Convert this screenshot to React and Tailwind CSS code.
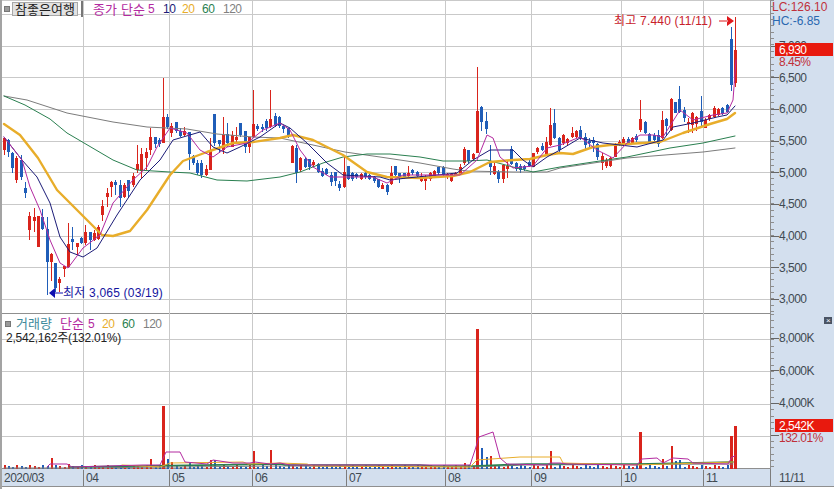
import React from "react";

// x, colour (r/b), body top, body bottom, wick top, wick bottom (screen pixels)
const candles = [
  [4.7,"r",138,150,137,155],[8.3,"b",140,152,139,157],[12.3,"b",153,168,152,173],[16.6,"r",158,180,156,183],[21.3,"b",160,177,155,180],[25.3,"b",188,193,182,198],
  [29.3,"r",216,230,212,240],[34,"r",217,221,208,232],[38.3,"r",216,247,216,247],[42.3,"b",217,229,209,230],[47.3,"b",229,262,217,295],[51.3,"r",254,262,253,281],
  [55.3,"b",263,288,263,292],[59.3,"r",279,283,277,292],[64.3,"r",266,269,266,277],[68.3,"r",244,267,223,268],[72.3,"b",239,242,227,250],[77.3,"r",243,247,243,255],
  [81.3,"b",238,243,237,244],[85.3,"r",232,243,225,245],[90.3,"b",232,240,232,250],[94.3,"r",233,240,230,241],[98.3,"r",227,239,225,240],[102.3,"r",206,215,200,221],
  [107,"r",193,197,188,207],[111,"r",182,187,181,197],[115.7,"b",182,185,180,195],[120,"b",185,198,180,207],[124.5,"r",185,197,183,198],[128.5,"b",180,191,180,197],
  [133,"r",176,185,173,187],[137,"r",164,170,145,173],[141.5,"r",154,171,148,178],[146,"r",152,158,148,170],[150.7,"r",137,150,128,155],[155,"b",137,144,137,148],
  [159,"b",140,144,138,147],[163.7,"r",117,143,78,143],[167.7,"b",117,127,114,129],[171.3,"r",126,133,123,137],[176.3,"b",122,131,122,133],[180.3,"b",131,136,128,137],
  [184.7,"r",131,135,127,136],[189.3,"b",132,154,132,170],[193.3,"b",156,163,155,165],[197,"b",163,173,160,175],[201.7,"b",163,175,160,178],[206.7,"r",169,175,165,176],
  [210.7,"r",151,170,138,170],[214.7,"b",114,143,114,146],[219,"b",140,144,140,153],[223.7,"r",135,150,117,154],[227.7,"b",134,143,123,147],[232,"r",135,147,131,147],
  [236.7,"r",137,140,127,142],[240.7,"b",123,135,123,137],[245.3,"b",131,147,131,153],[249.3,"r",137,147,137,153],[253.3,"r",124,137,90,138],[257.3,"b",126,129,124,131],
  [262,"b",127,129,124,132],[266,"b",121,128,119,131],[270,"r",119,127,90,128],[275,"b",116,125,113,127],[279,"b",117,126,116,128],[283.3,"b",126,129,125,133],
  [288,"b",128,137,128,138],[292.7,"r",146,163,145,163],[296.3,"b",148,173,145,183],[300.3,"r",158,170,157,172],[305.3,"b",159,167,157,168],[309.3,"b",159,167,159,170],
  [313.3,"r",162,165,160,167],[318.3,"b",164,172,163,173],[322.3,"b",171,176,168,177],[326.3,"b",169,174,168,175],[331.7,"b",175,182,172,186],[335.3,"b",172,181,172,186],
  [339.3,"b",184,188,181,191],[344.3,"r",172,187,157,188],[348.3,"b",166,179,166,180],[352.3,"b",173,179,172,181],[356.3,"b",174,177,173,179],[361.3,"r",174,179,173,180],
  [365.3,"b",173,177,172,179],[369.3,"b",175,179,174,180],[374.3,"b",177,181,176,183],[378.3,"b",179,187,179,188],[382.3,"r",185,189,183,189],[387.3,"b",185,192,184,195],
  [391.3,"r",173,184,166,185],[395.3,"b",166,175,166,176],[399.3,"b",173,177,173,183],[404.3,"b",173,177,173,179],[408.3,"r",173,176,166,177],[412.3,"b",170,173,169,175],
  [417.3,"b",172,176,171,179],[421.3,"r",176,181,173,182],[425.3,"r",177,181,175,190],[430.3,"r",173,179,172,181],[434.3,"r",171,177,170,177],[438.7,"b",167,173,167,175],
  [443.3,"b",167,175,166,176],[447.3,"r",174,177,173,179],[451.3,"r",174,181,173,182],[455.7,"r",173,175,172,176],[460.3,"r",167,174,164,175],[464.3,"r",149,163,147,165],
  [468.3,"b",150,161,150,163],[473.3,"r",154,159,153,161],[477.3,"r",111,153,67,153],[481.3,"b",107,122,106,131],[486.3,"b",121,129,112,134],[490.3,"b",162,167,145,175],
  [494.3,"r",166,174,162,175],[498.7,"b",172,179,170,183],[503.3,"r",165,179,164,183],[507.3,"r",166,169,160,178],[511.3,"b",149,164,146,165],[516.3,"b",163,169,162,171],
  [520.3,"b",166,170,164,173],[524.3,"b",166,169,165,171],[529.3,"b",162,166,160,167],[533.3,"r",153,167,153,167],[537.3,"r",148,152,147,154],[542.3,"b",146,150,143,151],
  [546.3,"r",142,154,137,156],[550.3,"r",125,145,108,146],[554.3,"b",123,138,109,139],[559.3,"b",138,150,137,152],[563.3,"r",135,143,134,145],[567.3,"r",139,143,138,145],
  [572.3,"r",133,137,127,138],[576.3,"r",131,137,130,138],[580.3,"b",130,138,126,140],[585,"b",137,145,133,150],[589.3,"b",141,143,138,147],[593.3,"b",140,143,137,152],
  [597.3,"b",144,157,143,160],[602.3,"r",156,163,153,170],[606.3,"r",160,166,158,168],[610.3,"r",158,166,157,167],[615.3,"r",145,157,143,157],[619.3,"r",142,145,140,146],
  [623.3,"r",139,145,137,146],[628.3,"b",139,143,137,144],[632.3,"r",138,143,137,144],[636.3,"b",136,140,134,142],[640.3,"r",119,130,100,132],[645.3,"b",122,133,121,134],
  [649.3,"b",134,142,133,144],[654.3,"b",135,140,133,142],[658.3,"b",135,144,130,147],[662.3,"r",120,138,111,139],[666.3,"b",119,126,118,135],[671.3,"r",99,130,98,131],
  [675.3,"b",102,113,102,113],[679.3,"b",99,112,86,113],[684.3,"b",110,118,107,122],[688.3,"r",122,124,118,133],[692.3,"r",113,125,112,133],[696.3,"r",117,124,116,131],
  [701.3,"b",111,122,96,128],[705.3,"r",120,128,118,128],[709.3,"r",115,119,114,121],[714.3,"r",108,117,106,118],[718.3,"r",109,115,108,116],[722.3,"b",108,114,107,115],
  [727.3,"b",105,112,104,113],[731.3,"b",39,85,27,91],[735.3,"r",50,83,17,87],
];

const ma120 = "4,96 27,100 67,113 113,122 147,127 187,129 217,134 253,137 280,138 313,145 345,152 380,157 420,163 453,169 467,171 513,172 547,172 560,168 627,158 703,152 735,148";
const ma60 = "4,96 25,105 50,119 67,133 113,160 137,170 170,172 190,173 217,180 247,181 280,177 300,172 323,163 343,157 367,154 390,154 420,157 443,161 467,161 487,160 513,167 533,172 560,167 593,162 627,157 670,148 703,143 735,136";
const ma20 = "4,124 20,135 38,158 57,190 77,210 102,235 113,236 130,231 147,210 170,175 183,161 207,152 233,143 253,142 280,138 293,135 313,140 343,155 367,172 387,177 420,178 453,176 470,172 490,162 513,160 530,159 547,155 560,153 573,154 593,147 610,145 660,142 683,133 710,124 727,119 735,113";
const ma10 = "4,137 22,160 37,177 50,203 60,237 70,252 83,257 97,248 117,215 140,180 160,160 173,140 200,132 213,147 227,153 240,147 260,137 280,123 290,128 307,143 327,163 343,175 380,177 390,180 407,178 457,173 473,160 490,150 513,150 523,160 533,167 547,157 560,150 580,138 603,143 637,147 663,140 673,127 693,123 717,117 727,115 735,106";
const ma5 = "4,137 22,160 30,187 40,210 50,240 60,263 68,268 83,248 100,235 113,203 133,180 147,167 157,147 170,128 187,133 200,150 213,157 227,147 247,143 263,130 280,123 290,130 300,150 313,167 330,177 343,177 373,177 387,183 403,175 447,175 460,175 477,160 487,135 493,138 500,157 513,168 533,166 547,148 560,145 580,137 597,150 613,158 627,143 640,135 653,135 663,137 680,110 693,120 713,115 727,113 733,100 736,60";

const volTops = {
  51: 458, 68: 464, 150: 459, 163: 406, 167: 459, 171: 462, 189: 463, 210: 460, 214: 460, 253: 451, 270: 450,
  464: 463, 477: 329, 481: 448, 486: 457, 490: 456, 550: 451, 640: 432, 662: 459, 671: 446, 675: 461, 679: 460, 731: 436, 735: 426,
};
const volRed = [490, 731];

const vol5 = "47,467 50,464 67,464 72,467 143,465 160,465 166,452 180,452 185,462 207,464 213,460 233,463 250,463 255,462 270,464 280,463 290,465 470,465 475,450 479,437 493,432 500,458 507,464 547,465 550,463 560,463 567,464 637,465 642,459 657,458 663,463 673,458 688,459 693,463 728,464 732,457 735,456";
const vol20 = "122,465 160,467 170,463 243,462 248,464 280,463 307,464 313,466 470,467 477,460 520,457 560,457 563,463 637,465 733,462";
const vol60 = "70,467 280,464 285,465 420,465 433,466 473,466 527,464 637,464 733,462";
const vol120 = "4,468 70,468 280,466 473,467 527,465 733,464";

const monthLines = [83, 169, 252, 346, 445, 531, 621, 703];
const months = [
  { label: "2020/03", w: "w-[81px]" },
  { label: "04", w: "w-[86px]" },
  { label: "05", w: "w-[83px]" },
  { label: "06", w: "w-[94px]" },
  { label: "07", w: "w-[99px]" },
  { label: "08", w: "w-[86px]" },
  { label: "09", w: "w-[90px]" },
  { label: "10", w: "w-[82px]" },
  { label: "11", w: "w-[67px]" },
];
const priceGrid = [14, 46, 77, 109, 141, 172, 204, 236, 267, 299];
const volumeGrid = [339, 371, 404, 436];
const prices = ["7,000", "6,500", "6,000", "5,500", "5,000", "4,500", "4,000", "3,500", "3,000"];

function Square() {
  return <span className="w-[6px] h-[6px] bg-[#9a9a9a] border border-[#777] shrink-0" />;
}

function Grid({ rows, y, h }) {
  return (
    <g stroke="#c9c9c9" strokeWidth="1" shapeRendering="crispEdges">
      {rows.map((r) => <line key={r} x1="2" x2="770" y1={r + 0.5} y2={r + 0.5} />)}
      {monthLines.map((m) => <line key={m} x1={m + 0.5} x2={m + 0.5} y1={y} y2={y + h} />)}
    </g>
  );
}

function Line({ points, color, width = 1 }) {
  return <polyline points={points} fill="none" stroke={color} strokeWidth={width} strokeLinejoin="round" strokeLinecap="round" />;
}

function PriceChart() {
  return (
    <svg viewBox="2 0 768 314" className="w-[768px] h-[314px] block">
      <Grid rows={[0, ...priceGrid]} y={0} h={314} />
      <g shapeRendering="crispEdges">
        {candles.map(([x, c, top, bot, hi, lo]) => {
          const px = Math.floor(x);
          const fill = c === "r" ? "#d9241c" : "#1f5db8";
          return (
            <g key={x} fill={fill}>
              <rect x={px} y={hi} width="1" height={lo - hi} />
              <rect x={px - 1} y={top} width="3" height={bot - top} />
            </g>
          );
        })}
      </g>
      <Line points={ma120} color="#7c7c7c" />
      <Line points={ma60} color="#2a7f50" />
      <Line points={ma20} color="#e8ad2a" width={2.4} />
      <Line points={ma10} color="#1c1c78" />
      <Line points={ma5} color="#b32aa0" />
      <path d="M49 293L55 288V298Z M55 292.5H63V293.5H55Z" fill="#1010b0" />
      <path d="M719 20.5H728V21.5H719Z M734 21L727 16V26Z" fill="#e0181c" />
    </svg>
  );
}

function VolumeChart() {
  return (
    <svg viewBox="2 314 768 156" className="w-[768px] h-[156px] block">
      <Grid rows={volumeGrid} y={314} h={156} />
      <g shapeRendering="crispEdges">
        {candles.map(([x, c], i) => {
          const px = Math.floor(x);
          const top = volTops[px] ?? 465 + ((i * 7) % 3);
          const spike = top < 440;
          const red = c === "r" || volRed.includes(px);
          return (
            <rect key={x} x={spike ? px - 1 : px} y={top} width={spike ? 3 : 2} height={469 - top} fill={red ? "#d9241c" : "#1f5db8"} />
          );
        })}
      </g>
      <Line points={vol120} color="#7c7c7c" />
      <Line points={vol60} color="#2a7f50" width={1.6} />
      <Line points={vol20} color="#e8ad2a" />
      <Line points={vol5} color="#b32aa0" />
    </svg>
  );
}

function AxisTicks({ rows, from, h }) {
  const minor = [];
  for (let y = from; y < from + h; y += 6.35) minor.push(Math.round(y));
  return (
    <svg viewBox={`0 0 8 ${h}`} className="absolute left-0 top-0 w-[8px]" style={{ height: h }}>
      <g stroke="#8d8d8d" shapeRendering="crispEdges">
        {minor.map((y) => <line key={y} x1="0" x2="3" y1={y - from + 0.5} y2={y - from + 0.5} />)}
        {rows.map((y) => <line key={y} x1="0" x2="8" y1={y - from + 0.5} y2={y - from + 0.5} stroke="#666" />)}
      </g>
    </svg>
  );
}

export default function App() {
  return (
    <div className="w-[834px] h-[489px] overflow-hidden bg-white flex flex-col border-l-2 border-[#a3a3a3] text-[12px] tracking-[-0.5px] font-['Liberation_Sans','Noto_Sans_CJK_KR',sans-serif] leading-none text-[#3f4a52]">
      <div className="flex h-[314px]">
        <div className="relative w-[768px]">
          <PriceChart />
          <div className="absolute left-[2px] top-[2px] flex items-center">
            <Square />
            <span className="ml-[2px] w-[66px] h-[14px] flex items-center justify-center bg-[#e2e2e2] border border-[#a8a8a8] text-[#222] text-[13px] tracking-normal">참좋은여행</span>
            <span className="ml-[3px]"><Square /></span>
            <div className="ml-[10px] flex items-center">
              <span className="text-[#b32aa0] w-[28px] text-[13px] tracking-normal">종가</span>
              <span className="text-[#b32aa0] w-[27px] text-[13px] tracking-normal">단순</span>
              <span className="text-[#b32aa0] w-[15px]">5</span>
              <span className="text-[#1c1c78] w-[19px]">10</span>
              <span className="text-[#e8ad2a] w-[20px]">20</span>
              <span className="text-[#2a7f50] w-[21px]">60</span>
              <span className="text-[#808080]">120</span>
            </div>
          </div>
          <span className="absolute left-[61px] top-[287px] text-[#1414a0] tracking-[0.2px]">최저 3,065 (03/19)</span>
          <span className="absolute left-[612px] top-[15px] text-[#c8202a] tracking-[0.2px]">최고 7.440 (11/11)</span>
        </div>
        <div className="relative w-[64px] bg-[#d3dfee] border-l border-[#8d8d8d]">
          <AxisTicks rows={priceGrid.slice(1)} from={0} h={314} />
          <div className="flex flex-col pl-px pt-[1px] tracking-normal">
            <span className="h-[14px] leading-[12px] text-[#c0303a]">LC:126.10</span>
            <span className="h-[12px] leading-[12px] text-[#2a68b0]">HC:-6.85</span>
          </div>
          <div className="flex flex-col pl-[8px] mt-[3px]">
            {prices.map((p) => (
              <span key={p} className="h-[31.7px] flex items-center">{p}</span>
            ))}
          </div>
          <div className="absolute left-[4px] top-[43px] w-[58px] h-[13px] bg-[#e8190e] text-white pl-[4px] flex items-center">6,930</div>
          <span className="absolute left-[8px] top-[56px] text-[#c0303a]">8.45%</span>
        </div>
      </div>
      <div className="flex h-[156px] border-t border-[#8f8f8f] -mt-px">
        <div className="relative w-[768px]">
          <VolumeChart />
          <div className="absolute left-[3px] top-[3px] flex flex-col gap-[2px]">
            <div className="flex items-center">
              <Square />
              <span className="ml-[5px] w-[44px] text-[#3d8a9c] text-[13px] tracking-normal">거래량</span>
              <span className="w-[28px] text-[#b32aa0] text-[13px] tracking-normal">단순</span>
              <span className="w-[14px] text-[#b32aa0]">5</span>
              <span className="w-[20px] text-[#e8ad2a]">20</span>
              <span className="w-[21px] text-[#2a7f50]">60</span>
              <span className="text-[#808080]">120</span>
            </div>
            <span className="pl-px text-[#222] tracking-[-0.25px]">2,542,162주(132.01%)</span>
          </div>
        </div>
        <div className="relative w-[64px] bg-[#d3dfee] border-l border-[#8d8d8d]">
          <AxisTicks rows={volumeGrid.map((v) => v - 1)} from={314} h={156} />
          <span className="absolute right-[2px] top-[3px] w-[8px] h-[7px] bg-[#4a5464] text-white text-[8px] flex items-center justify-center">×</span>
          <div className="flex flex-col pl-[8px] pt-[8px]">
            {["8,000K", "6,000K", "4,000K"].map((v) => (
              <span key={v} className="h-[32.5px] flex items-center">{v}</span>
            ))}
          </div>
          <div className="absolute left-[4px] top-[105px] w-[58px] h-[13px] bg-[#e8190e] text-white pl-[4px] flex items-center">2,542K</div>
          <span className="absolute left-[8px] top-[118px] text-[#c0303a]">132.01%</span>
        </div>
      </div>
      <div className="flex h-[19px] bg-[#d3dfee] border-t border-b border-[#8f8f8f] -mt-px">
        {months.map((m, i) => (
          <span key={m.label} className={`${m.w} flex items-center pl-[2px] ${i ? "border-l border-[#7d7d7d]" : ""}`}>{m.label}</span>
        ))}
        <span className="flex-1 flex items-center pl-[8px] border-l border-[#7d7d7d]">11/11</span>
      </div>
    </div>
  );
}
